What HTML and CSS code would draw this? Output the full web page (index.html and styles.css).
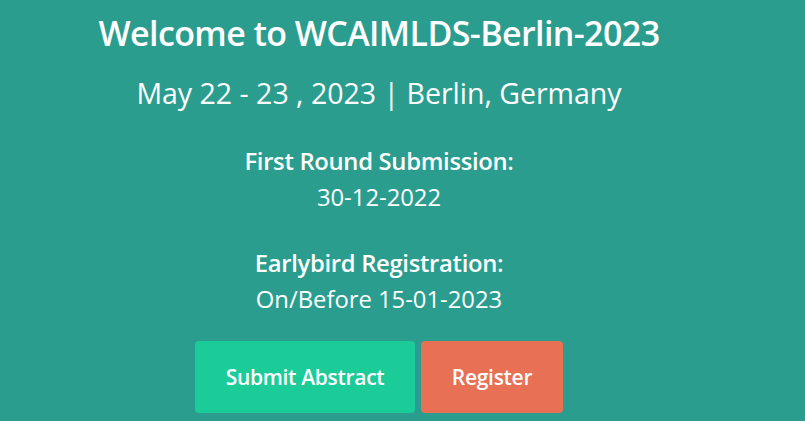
FILE: index.html
```html
<!DOCTYPE html>
<html>
<head>
<meta charset="utf-8">
<link rel="stylesheet" href="styles.css">
</head>
<body>
<main class="hero">
  <h1 class="title">Welcome to WCAIMLDS-Berlin-2023</h1>
  <p class="subtitle">May 22 - 23 , 2023 | Berlin, Germany</p>
  <div class="dates">
    <div class="date-item">
      <h3 class="date-label">First Round Submission:</h3>
      <p class="date-value">30-12-2022</p>
    </div>
    <div class="date-item">
      <h3 class="date-label">Earlybird Registration:</h3>
      <p class="date-value">On/Before 15-01-2023</p>
    </div>
  </div>
  <div class="actions">
    <a class="btn btn-green" href="#">Submit Abstract</a>
    <a class="btn btn-orange" href="#">Register</a>
  </div>
</main>
</body>
</html>
```

FILE: styles.css
```css
html, body {
  margin: 0;
  padding: 0;
  background: #2b9d8e;
  height: 100%;
  overflow: hidden;
}
body {
  font-family: "Open Sans", "Noto Sans", sans-serif;
  color: #ffffff;
}
.hero {
  width: 758px;
  display: flex;
  flex-direction: column;
  align-items: center;
  text-align: center;
}
.title {
  margin: 8px 0 0;
  font-size: 34px;
  font-weight: 600;
  letter-spacing: -0.6px;
  line-height: 50px;
}
.subtitle {
  margin: 15px 0 0;
  font-size: 28.5px;
  font-weight: 400;
  line-height: 40px;
}
.dates {
  display: flex;
  flex-direction: column;
  gap: 30px;
  margin-top: 30px;
}
.date-label {
  margin: 0;
  font-size: 23.8px;
  font-weight: 600;
  line-height: 36px;
  letter-spacing: -0.3px;
}
.date-value {
  margin: 0;
  font-size: 23.8px;
  font-weight: 400;
  line-height: 36px;
}
.actions {
  display: flex;
  gap: 6px;
  margin-top: 24px;
}
.btn {
  box-sizing: border-box;
  display: flex;
  align-items: center;
  justify-content: center;
  height: 72px;
  border-radius: 4px;
  color: #ffffff;
  text-decoration: none;
  white-space: nowrap;
  font-size: 21px;
  font-weight: 600;
  letter-spacing: -0.3px;
}
.btn-green {
  background: #1bcb98;
  width: 220px;
}
.btn-orange {
  background: #e77055;
  width: 142px;
}
```
